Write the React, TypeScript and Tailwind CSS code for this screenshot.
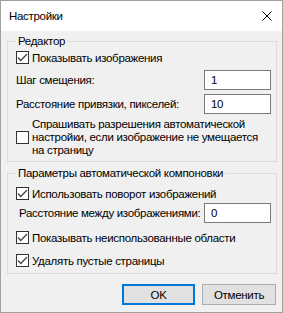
import React from "react";

const Check = ({ checked }: { checked: boolean }) => (
  <span className="w-[13px] h-[13px] border border-[#333333] bg-white flex-none flex items-center justify-center">
    {checked && (
      <svg width="11" height="11" viewBox="0 0 11 11">
        <polyline points="1,5.5 3.8,8.5 10,2" fill="none" stroke="#444444" strokeWidth="1.3" />
      </svg>
    )}
  </span>
);

const Field = ({ value }: { value: string }) => (
  <div className="w-[67px] h-[20px] border border-[#7a7a7a] bg-white flex items-center pl-[6px] flex-none">
    {value}
  </div>
);

export default function App() {
  return (
    <div className="w-[283px] h-[313px] border border-[#a0a0a0] bg-[#f0f0f0] flex flex-col text-[11.5px] tracking-[-0.3px] text-black font-['Liberation_Sans',Arial,sans-serif] leading-[16px] overflow-hidden whitespace-nowrap">
      <div className="h-[30px] bg-white flex items-center justify-between pl-[8px] pr-[10px] flex-none">
        <span>Настройки</span>
        <svg width="10" height="10" viewBox="0 0 10 10">
          <path d="M0.5 0.5 L9.5 9.5 M9.5 0.5 L0.5 9.5" stroke="#000" strokeWidth="1" />
        </svg>
      </div>

      <fieldset className="mt-[2px] ml-[6px] w-[270px] border border-[#dcdcdc] pl-[8px] pr-[5px] pb-[4px] flex-none">
        <legend className="px-[2px] leading-[16px]">Редактор</legend>
        <div className="h-[17px] flex items-center gap-[3px]">
          <Check checked />
          <span>Показывать изображения</span>
        </div>
        <div className="mt-[4px] h-[20px] flex items-center justify-between">
          <span>Шаг смещения:</span>
          <Field value="1" />
        </div>
        <div className="mt-[4px] h-[20px] flex items-center justify-between">
          <span>Расстояние привязки, пикселей:</span>
          <Field value="10" />
        </div>
        <div className="mt-[4px] flex items-center gap-[3px]">
          <Check checked={false} />
          <span className="leading-[13px]">
            Спрашивать разрешения автоматической
            <br />
            настройки, если изображение не умещается
            <br />
            на страницу
          </span>
        </div>
      </fieldset>

      <fieldset className="mt-[3px] ml-[6px] w-[270px] border border-[#dcdcdc] pl-[8px] pr-[5px] pb-[4px] flex-none">
        <legend className="px-[2px] leading-[16px]">Параметры автоматической компоновки</legend>
        <div className="mt-[4px] h-[17px] flex items-center gap-[3px]">
          <Check checked />
          <span>Использовать поворот изображений</span>
        </div>
        <div className="mt-[1px] h-[20px] flex items-center justify-between">
          <span className="pl-[3px]">Расстояние между изображениями:</span>
          <Field value="0" />
        </div>
        <div className="mt-[6px] h-[17px] flex items-center gap-[3px]">
          <Check checked />
          <span>Показывать неиспользованные области</span>
        </div>
        <div className="mt-[6px] h-[17px] flex items-center gap-[3px]">
          <Check checked />
          <span>Удалять пустые страницы</span>
        </div>
      </fieldset>

      <div className="mt-[10px] flex justify-end gap-[7px] pr-[6px] flex-none">
        <div className="w-[73px] h-[21px] border-2 border-[#0078d7] bg-[#e1e1e1] flex items-center justify-center">
          OK
        </div>
        <div className="w-[74px] h-[21px] border border-[#adadad] bg-[#e1e1e1] flex items-center justify-center">
          Отменить
        </div>
      </div>
    </div>
  );
}
